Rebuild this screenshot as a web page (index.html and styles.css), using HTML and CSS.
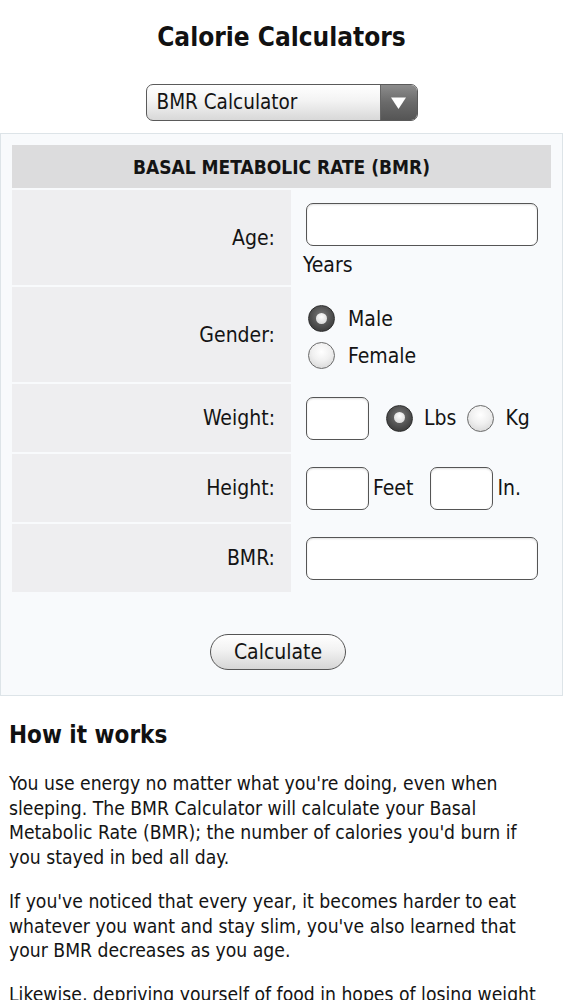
FILE: index.html
```html
<!DOCTYPE html>
<html lang="en">
<head>
<meta charset="utf-8">
<title>Calorie Calculators</title>
<link rel="stylesheet" href="styles.css">
</head>
<body>
<h1 class="title">Calorie Calculators</h1>
<div class="picker">
  <div class="select">
    <span class="select-text">BMR Calculator</span>
    <span class="select-arrow"><svg width="17" height="14" viewBox="0 0 17 14"><path d="M1 1.5 H16 L8.5 13 Z" fill="#fff"/></svg></span>
  </div>
</div>
<div class="panel">
  <div class="form">
    <div class="head">BASAL METABOLIC RATE (BMR)</div>

    <div class="label row-tall">Age:</div>
    <div class="field row-tall age">
      <input class="box wide" type="text">
      <span class="unit-below">Years</span>
    </div>

    <div class="label row-tall">Gender:</div>
    <div class="field row-tall gender">
      <label class="opt"><span class="radio on"></span>Male</label>
      <label class="opt"><span class="radio"></span>Female</label>
    </div>

    <div class="label">Weight:</div>
    <div class="field inline">
      <input class="box small" type="text">
      <label class="opt lbs"><span class="radio on"></span>Lbs</label>
      <label class="opt kg"><span class="radio"></span>Kg</label>
    </div>

    <div class="label">Height:</div>
    <div class="field inline">
      <input class="box small" type="text"><span class="unit">Feet</span>
      <input class="box small in" type="text"><span class="unit">In.</span>
    </div>

    <div class="label">BMR:</div>
    <div class="field inline">
      <input class="box wide" type="text">
    </div>
  </div>
  <div class="actions">
    <button class="calc" type="button">Calculate</button>
  </div>
</div>
<section class="info">
  <h2>How it works</h2>
  <p>You use energy no matter what you're doing, even when sleeping. The BMR Calculator will calculate your Basal Metabolic Rate (BMR); the number of calories you'd burn if you stayed in bed all day.</p>
  <p>If you've noticed that every year, it becomes harder to eat whatever you want and stay slim, you've also learned that your BMR decreases as you age.</p>
  <p>Likewise, depriving yourself of food in hopes of losing weight can also decrease your BMR, a phenomenon known as the starvation mode.</p>
</section>
</body>
</html>
```
FILE: styles.css
```css
* { box-sizing: border-box; }
html, body { background: #fff; }
body {
  margin: 0;
  font-family: "DejaVu Sans Condensed", "DejaVu Sans", sans-serif;
  font-size: 19px;
  color: #141414;
}
.title {
  margin: 0;
  padding-top: 21px;
  height: 84px;
  text-align: center;
  font-size: 26px;
  font-weight: bold;
  color: #111;
  line-height: 32px;
}
.picker {
  display: flex;
  justify-content: center;
  height: 49px;
}
.select {
  width: 272px;
  height: 37px;
  display: flex;
  border: 1.5px solid #5a5a5a;
  border-radius: 7px;
  overflow: hidden;
  background: linear-gradient(#ffffff, #f3f3f3 45%, #d8d8d8);
}
.select-text {
  flex: 1;
  padding-left: 10px;
  line-height: 34px;
  font-size: 20.5px;
  color: #141414;
}
.select-arrow {
  width: 37px;
  display: flex;
  align-items: center;
  justify-content: center;
  border-left: 1px solid #666;
  background: linear-gradient(#8c8c8c, #6a6a6a 50%, #555);
}
.panel {
  border: 1.5px solid #dde4e8;
  background: #f8fafc;
  padding: 11px 11px 0 11px;
  height: 563px;
}
.form {
  display: grid;
  grid-template-columns: 279px 1fr;
  row-gap: 2px;
  font-size: 21px;
}
.head {
  grid-column: 1 / 3;
  height: 43px;
  background: #dcdcdd;
  text-align: center;
  font-weight: bold;
  font-size: 19px;
  line-height: 45px;
  color: #141414;
}
.label {
  background: #eeeef0;
  height: 68px;
  display: flex;
  align-items: center;
  justify-content: flex-end;
  padding-right: 16px;
}
.label.row-tall, .field.row-tall { height: 95px; }
.field {
  height: 68px;
  padding-left: 15px;
}
.field.inline {
  display: flex;
  align-items: center;
}
.age { padding-top: 13px; }
.unit-below {
  display: block;
  margin-left: -3px;
  margin-top: 6px;
  line-height: 26px;
}
.box {
  appearance: none;
  -webkit-appearance: none;
  display: block;
  height: 43px;
  border: 1.5px solid #555;
  border-radius: 7px;
  background: #fff;
  box-shadow: inset 0 1px 2px rgba(0,0,0,0.12);
  font: inherit;
  margin: 0;
  padding: 0 6px;
}
.box.wide { width: 232px; }
.box.small { width: 63px; }
.box.in { margin-left: 17px; }
.unit { margin-left: 4px; }
.gender {
  display: flex;
  flex-direction: column;
  justify-content: center;
  gap: 10px;
  padding-left: 17px;
  padding-top: 5px;
}
.opt {
  display: flex;
  align-items: center;
  gap: 13px;
  height: 27px;
}
.radio {
  width: 27px;
  height: 27px;
  border-radius: 50%;
  border: 1.5px solid #6a6a6a;
  background: radial-gradient(circle at 50% 35%, #ffffff 0%, #f0f0f0 45%, #cfcfcf 100%);
  position: relative;
  flex: none;
}
.radio.on {
  border-color: #2e2e2e;
  background: radial-gradient(circle at 50% 40%, #7a7a7a 0%, #4a4a4a 60%, #2c2c2c 100%);
}
.radio.on::after {
  content: "";
  position: absolute;
  left: 6.5px;
  top: 6.5px;
  width: 11px;
  height: 11px;
  border-radius: 50%;
  background: radial-gradient(circle at 50% 35%, #ffffff, #cfcfcf);
}
.lbs { margin-left: 17px; gap: 11px; }
.kg { margin-left: 11px; gap: 11px; }
.actions {
  display: flex;
  justify-content: center;
  padding-top: 42px;
  padding-right: 7px;
}
.calc {
  width: 136px;
  height: 36px;
  border: 1.5px solid #555;
  border-radius: 18px;
  background: linear-gradient(#ffffff, #f2f2f2 45%, #d6d6d6);
  font: inherit;
  font-size: 21px;
  color: #141414;
  padding: 0;
}
.info {
  padding: 24px 12px 0 9px;
}
.info h2 {
  margin: 0 0 22px 0;
  font-size: 24px;
  font-weight: bold;
  line-height: 30px;
  color: #111;
}
.info p {
  margin: 0 0 19px 0;
  line-height: 24.7px;
  font-size: 19.2px;
}
```
